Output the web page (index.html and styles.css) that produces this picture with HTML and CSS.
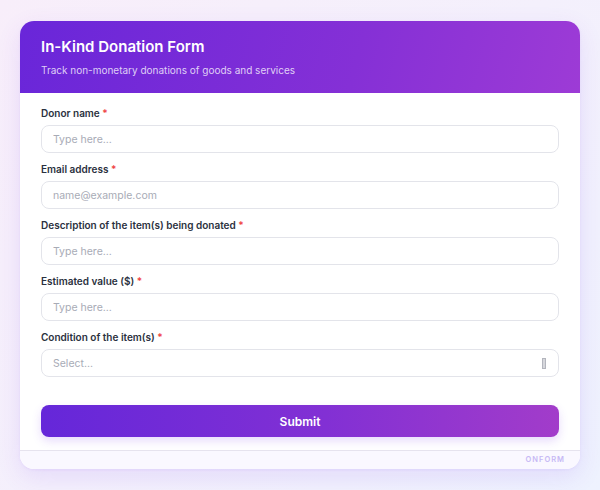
FILE: index.html
```html
<!DOCTYPE html>
<html lang="en">
<head>
    <meta charset="UTF-8">
    <meta name="viewport" content="width=device-width, initial-scale=1.0">
    <title>In-Kind Donation Form</title>
    <link rel="stylesheet" href="styles.css">
</head>
<body>
    <div class="page">
        <form class="form-card">
            <div class="form-header">
                <h1>In-Kind Donation Form</h1>
                <p>Track non-monetary donations of goods and services</p>
            </div>

            <div class="form-body">
                <div class="field">
                    <label>Donor name <span class="req">*</span></label>
                    <input type="text" placeholder="Type here...">
                </div>
                <div class="field">
                    <label>Email address <span class="req">*</span></label>
                    <input type="email" placeholder="name@example.com">
                </div>
                <div class="field">
                    <label>Description of the item(s) being donated <span class="req">*</span></label>
                    <input type="text" placeholder="Type here...">
                </div>
                <div class="field">
                    <label>Estimated value ($) <span class="req">*</span></label>
                    <input type="text" placeholder="Type here...">
                </div>
                <div class="field">
                    <label>Condition of the item(s) <span class="req">*</span></label>
                    <div class="select">
                        <span>Select...</span>
                        <span class="select-icon"></span>
                    </div>
                </div>

                <button type="button" class="submit-button">Submit</button>
            </div>

            <div class="form-footer">ONFORM</div>
        </form>
    </div>
</body>
</html>
```

FILE: styles.css
```css
* {
    box-sizing: border-box;
}

body {
    margin: 0;
    font-family: Inter, "Noto Sans", sans-serif;
    background: linear-gradient(135deg, #f8eefa 0%, #f4f0fc 50%, #eef2fe 100%);
    min-height: 490px;
}

.page {
    padding: 21px 20px;
}

.form-card {
    width: 560px;
    background: #fff;
    border-radius: 14px;
    overflow: hidden;
    box-shadow: 0 8px 24px rgba(124, 58, 237, 0.12), 0 1px 3px rgba(124, 58, 237, 0.08);
}

.form-header {
    padding: 16px 21px 15px;
    background: linear-gradient(105deg, #6926d9 0%, #8530d6 60%, #9d3bd6 100%);
    color: #fff;
}

.form-header h1 {
    margin: 0;
    font-size: 15px;
    line-height: 20px;
    font-weight: 600;
}

.form-header p {
    margin: 5px 0 0;
    font-size: 10px;
    line-height: 16px;
    color: rgba(255, 255, 255, 0.78);
}

.form-body {
    padding: 12px 21px 13px 21px;
}

.field {
    display: flex;
    flex-direction: column;
    gap: 4px;
    margin-bottom: 8px;
}

.field label {
    font-size: 10px;
    line-height: 16px;
    font-weight: 600;
    color: #2b3140;
}

.req {
    color: #ef4444;
}

.field input,
.select {
    height: 28px;
    width: 100%;
    border: 1.5px solid #e3e4ea;
    border-radius: 8px;
    padding: 0 11px;
    font-family: inherit;
    font-size: 10.5px;
    color: #2b3140;
    background: #fff;
    outline: none;
}

.field input::placeholder {
    color: #a8abb6;
}

.select {
    display: flex;
    align-items: center;
    justify-content: space-between;
    color: #a8abb6;
}

.select-icon {
    width: 4px;
    height: 11px;
    border: 1px solid #b3b5bd;
    background: #d6d7dc;
    margin-right: 1px;
}

.submit-button {
    display: block;
    width: 100%;
    height: 32px;
    margin-top: 28px;
    border: none;
    border-radius: 8px;
    background: linear-gradient(90deg, #6527d9 0%, #8230d4 55%, #a23cca 100%);
    color: #fff;
    font-family: inherit;
    font-size: 12px;
    font-weight: 600;
    cursor: pointer;
    box-shadow: 0 4px 10px rgba(124, 58, 237, 0.18);
}

.form-footer {
    height: 19px;
    border-top: 1px solid #e6e3ee;
    background: #faf8ff;
    text-align: right;
    padding-right: 15px;
    font-size: 7.5px;
    line-height: 18px;
    font-weight: 600;
    letter-spacing: 1px;
    color: #c7b8f5;
}
```
